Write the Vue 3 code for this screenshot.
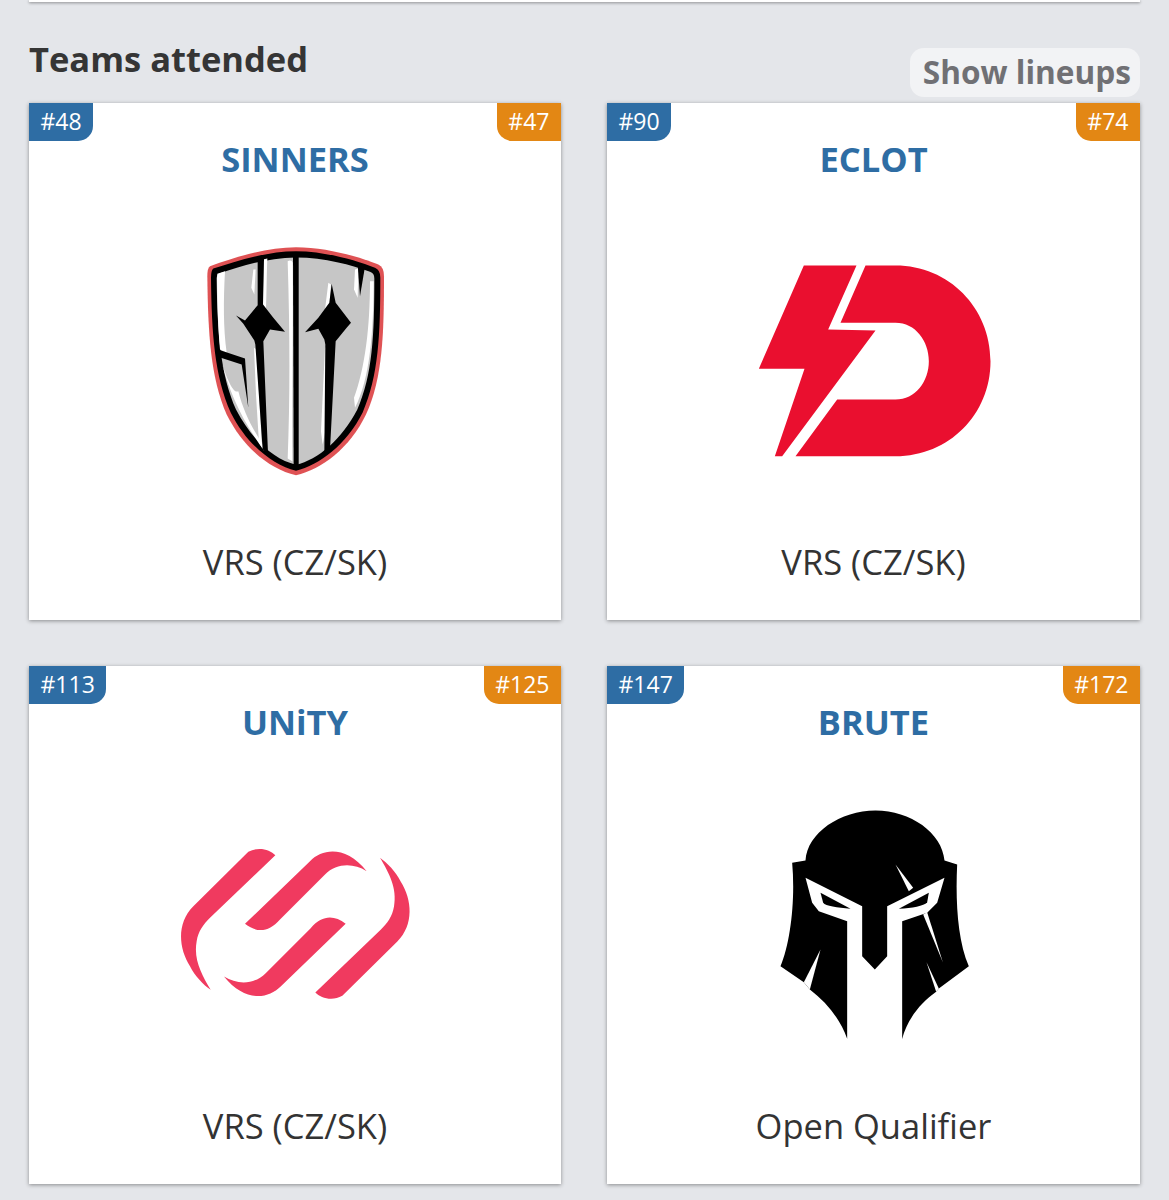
<script setup>
const teams = [
  { name: 'SINNERS', logo: 'sinners', world: 48, regional: 47, source: 'VRS (CZ/SK)' },
  { name: 'ECLOT', logo: 'eclot', world: 90, regional: 74, source: 'VRS (CZ/SK)' },
  { name: 'UNiTY', logo: 'unity', world: 113, regional: 125, source: 'VRS (CZ/SK)' },
  { name: 'BRUTE', logo: 'brute', world: 147, regional: 172, source: 'Open Qualifier' }
];
</script>

<template>
  <div class="page">
    <div class="top-card"></div>

    <div class="section-head">
      <h2>Teams attended</h2>
      <button class="toggle">Show lineups</button>
    </div>

    <div class="team-grid">
      <div v-for="team in teams" :key="team.name" class="team-card">
        <span class="rank rank-world">#{{ team.world }}</span>
        <span class="rank rank-regional">#{{ team.regional }}</span>
        <div class="team-name">{{ team.name }}</div>

        <div class="team-logo">
          <!-- shield -->
          <svg v-if="team.logo === 'sinners'" width="210" height="250" viewBox="0 4.5 630 750">
            <path fill="#df5254" d="M60 95C130 70 230 38 318 38C410 38 510 68 565 90Q582 98 582 125C582 300 578 430 528 540C480 640 395 705 318 722C240 705 160 640 110 540C62 430 54 300 52 125Q52 100 60 95Z" />
            <path fill="#000" d="M70 102C140 80 230 50 318 50C405 50 500 78 555 100Q571 106 571 130C571 300 566 425 518 534C470 630 388 692 318 709C248 692 170 630 122 534C74 425 65 300 63 130Q63 107 70 102Z" />
            <path fill="#c6c6c6" d="M90 116C150 96 230 70 318 69C405 69 485 92 540 112Q553 116 553 132C553 300 548 420 502 525C455 615 385 675 318 691C250 675 185 615 138 525C92 420 82 300 80 132Q80 120 90 116Z" />
            <g fill="#fff">
              <path d="M82 118L105 110C100 200 100 280 110 354L90 345C84 280 82 200 81 130Z" />
              <path d="M97 390C115 460 150 550 222 648L226 640C190 590 160 530 145 470C130 480 110 430 97 390Z" />
              <path d="M222 74L232 72C230 120 230 180 228 222L218 208Z" />
              <path d="M190 105L197 105L193 180L184 160Z" />
              <path d="M293 80Q305 75 308 85C310 300 305 500 307 680L293 672C300 500 300 300 293 80Z" />
              <path d="M415 145L423 150L418 215L405 225Z" />
              <path d="M540 140L551 140C550 300 540 430 495 520L492 490C525 400 540 280 540 140Z" />
              <path d="M495 105L505 102L503 190L492 165Z" />
              <path d="M405 340L416 335L410 570L398 630L393 590Z" />
              <path d="M192 340L200 345L216 640L207 625L198 480Z" />
            </g>
            <g fill="#000">
              <path d="M203 72L222 70L219 210L250 250L285 292L240 285L220 320L234 655L218 645L196 330L193 318L160 268L138 243L165 258L203 212Z" />
              <path d="M309 62L326 62L326 695L311 698Z" />
              <path d="M425 148L437 205L483 265L470 280L437 320L420 645L403 655L406 330L403 315L385 283L345 293L385 250L418 205Z" />
              <path d="M503 90L525 96L510 185Z" />
              <path d="M84 345L165 372L175 520L155 390L88 368Z" />
            </g>
          </svg>

          <!-- bolt + D -->
          <svg v-else-if="team.logo === 'eclot'" width="260" height="220" viewBox="-4.5 4.5 780 660">
            <g fill="#ea0f2f">
              <path d="M175 48L333 48L248 240L390 243L110 620L88 620L177 358L40 358Z" />
              <path d="M360 48L450 48C610 48 735 175 735 335C735 495 610 620 450 620L150 620L275 450L450 450C510 450 550 395 550 335C550 275 510 220 450 220L285 220Z" />
            </g>
          </svg>

          <!-- four ribbons -->
          <svg v-else-if="team.logo === 'unity'" width="250" height="175" viewBox="0 7.5 750 525">
            <g fill="#f03a5f">
              <path d="M316 62C300 45 265 35 235 52L70 215C20 265 25 340 60 395C75 425 100 450 122 466C95 420 70 375 80 320C85 290 100 270 120 250Z" />
              <path d="M225 268L420 80C460 40 530 35 590 110C550 85 500 85 465 120L330 255C295 295 260 295 225 268Z" />
              <path d="M527 268L332 456C292 496 222 501 162 426C202 451 252 451 287 416L422 281C457 241 492 241 527 268Z" />
              <path d="M436 474C452 491 487 501 517 484L682 321C732 271 727 196 692 141C677 111 652 86 630 70C657 116 682 161 672 216C667 246 652 266 632 286Z" />
            </g>
          </svg>

          <!-- helmet -->
          <svg v-else width="210" height="245" viewBox="-4.5 7.5 630 735">
            <path fill="#000" d="M105 183C110 100 210 33 315 33C420 33 515 100 522 183L560 195C555 300 560 420 595 500L505 567L497 577C450 610 410 660 395 718L230 718C210 660 170 610 118 570L100 548L30 500C60 430 75 300 65 190Z" />
            <g fill="#fff">
              <path d="M105 235L275 320L275 470L313 510L350 470L350 320L522 235L500 310L470 340L395 365L395 722L230 722L230 365L145 335L125 310Z" />
              <path d="M375 195L428 265L415 275Z" />
              <path d="M458 345L470 338L517 488Z" />
              <path d="M150 450L100 548L118 570Z" />
              <path d="M468 488L505 567L497 577Z" />
            </g>
            <path fill="#000" d="M150 280L240 328C200 325 165 320 158 310Z" />
            <path fill="#000" d="M475 280L385 328C425 325 460 320 470 308Z" />
          </svg>
        </div>

        <div class="team-source">{{ team.source }}</div>
      </div>
    </div>
  </div>
</template>

<style>
html,
body {
  margin: 0;
  background-color: #e4e6ea;
}
</style>

<style scoped>
.page {
  padding: 0 29px 16px;
  font-family: 'Open Sans', 'Noto Sans', sans-serif;
  color: #333;
}

.top-card {
  height: 2px;
  background-color: #fff;
  box-shadow: 0 1px 3px rgba(0, 0, 0, 0.45);
}

.section-head {
  display: flex;
  justify-content: space-between;
  align-items: flex-start;
  height: 66px;
  padding-top: 35px;
}

.section-head h2 {
  margin: 0;
  font-size: 34.5px;
  line-height: 44px;
  font-weight: 700;
  color: #353535;
}

.toggle {
  height: 49px;
  margin-top: 11px;
  padding: 0 9px 2px 13px;
  border: none;
  border-radius: 14px;
  background-color: #f2f3f5;
  font-family: inherit;
  font-size: 31.6px;
  font-weight: 700;
  color: #707074;
}

.team-grid {
  display: grid;
  grid-template-columns: 532px 533px;
  grid-template-rows: 517px 518px;
  gap: 46px;
}

.team-card {
  position: relative;
  display: flex;
  flex-direction: column;
  background-color: #fff;
  box-shadow: 0 1px 4px rgba(0, 0, 0, 0.4);
}

.rank {
  position: absolute;
  top: 0;
  height: 38px;
  padding: 0 11.5px;
  font-size: 23px;
  line-height: 36px;
  color: #fff;
}

.rank-world {
  left: 0;
  background-color: #2e6da4;
  border-bottom-right-radius: 15px;
}

.rank-regional {
  right: 0;
  background-color: #e38714;
  border-bottom-left-radius: 15px;
}

.team-name {
  padding-top: 34px;
  font-size: 34.5px;
  line-height: 44px;
  font-weight: 700;
  text-align: center;
  color: #2e6da4;
}

.team-logo {
  flex: 1;
  display: flex;
  align-items: center;
  justify-content: center;
}

.team-source {
  padding-bottom: 36px;
  font-size: 34.5px;
  line-height: 44px;
  text-align: center;
  color: #333;
}
</style>
